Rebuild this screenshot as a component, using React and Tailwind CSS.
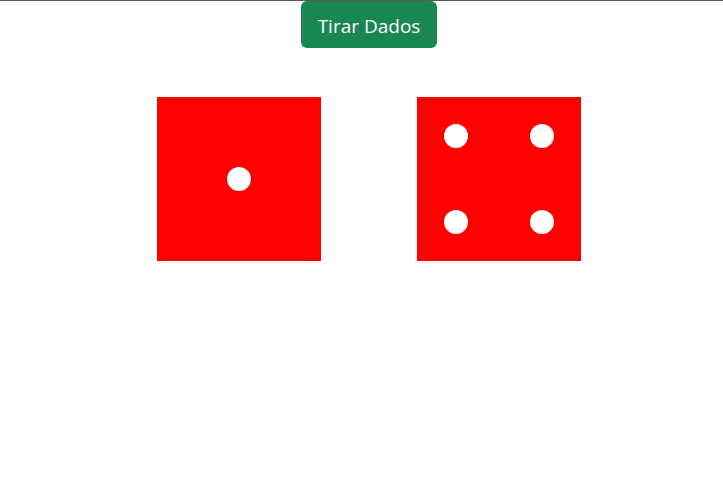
export default function App() {
  return (
    <div className="min-h-[480px] bg-white border-t border-[#5a5a5a] pl-[15px] flex flex-col items-center" style={{ fontFamily: '"Open Sans", sans-serif' }}>
      <button className="h-[47px] w-[136px] rounded-[6px] bg-[#198754] text-white text-[19px] leading-none flex items-center justify-center pt-[3px]">
        Tirar Dados
      </button>
      <div className="mt-[31px] flex gap-[60px]">
        <div className="w-[200px] h-[200px] box-border bg-[#ff0000] border-[18px] border-white rounded-[10px] flex items-center justify-center">
          <div className="w-[24px] h-[24px] rounded-full bg-white" />
        </div>
        <div className="w-[200px] h-[200px] box-border bg-[#ff0000] border-[18px] border-white rounded-[10px] p-[27px] flex flex-col justify-between">
          <div className="flex justify-between">
            <div className="w-[24px] h-[24px] rounded-full bg-white" />
            <div className="w-[24px] h-[24px] rounded-full bg-white" />
          </div>
          <div className="flex justify-between">
            <div className="w-[24px] h-[24px] rounded-full bg-white" />
            <div className="w-[24px] h-[24px] rounded-full bg-white" />
          </div>
        </div>
      </div>
    </div>
  );
}
